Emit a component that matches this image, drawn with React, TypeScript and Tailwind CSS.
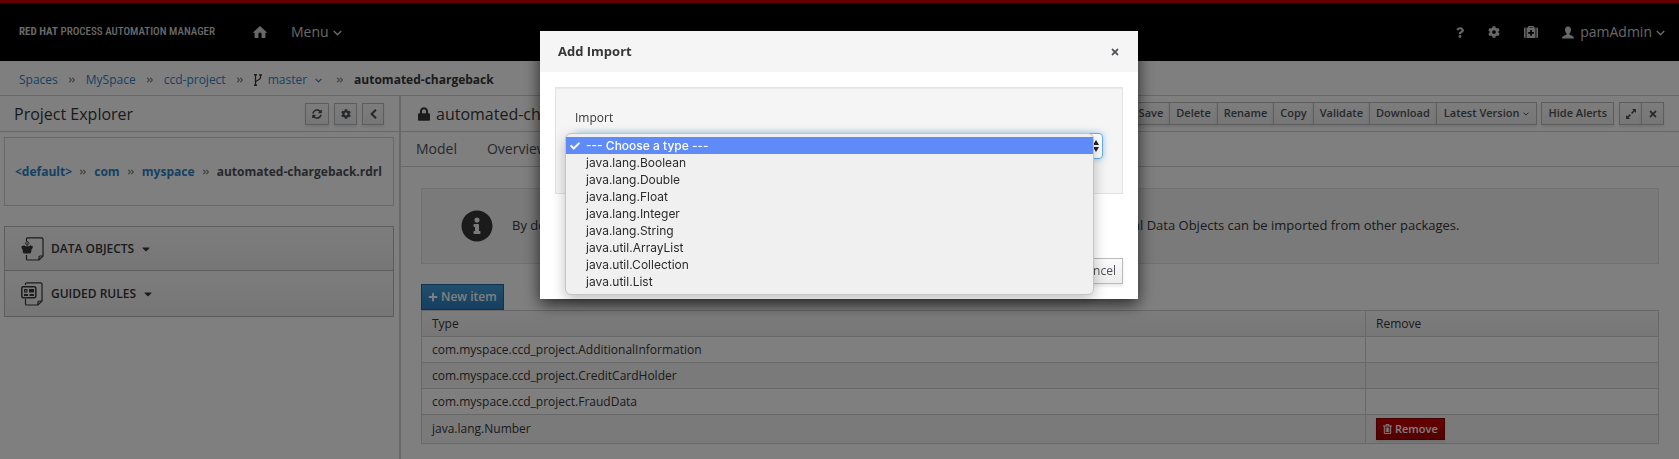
import React from "react";
import {
  FaAngleDoubleRight,
  FaCaretDown,
  FaCheck,
  FaCog,
  FaInfoCircle,
  FaLock,
  FaPlus,
  FaQuestion,
  FaSyncAlt,
  FaTimes,
} from "react-icons/fa";

const TYPES = [
  "java.lang.Boolean",
  "java.lang.Double",
  "java.lang.Float",
  "java.lang.Integer",
  "java.lang.String",
  "java.util.ArrayList",
  "java.util.Collection",
  "java.util.List",
];

const IMPORTS = [
  { type: "com.myspace.ccd_project.AdditionalInformation", removable: false },
  { type: "com.myspace.ccd_project.CreditCardHolder", removable: false },
  { type: "com.myspace.ccd_project.FraudData", removable: false },
  { type: "java.lang.Number", removable: true },
];

const TOOLBAR = ["Save", "Delete", "Rename", "Copy", "Validate", "Download"];

const CHROME_BUTTON =
  "flex items-center justify-center border border-[#bbb] bg-linear-to-b from-[#fafafa] to-[#ededed] text-[#4d5258] shadow-[0_2px_3px_rgba(3,3,3,0.1)]";

function HomeIcon() {
  return (
    <svg viewBox="0 0 14 12" className="h-3 w-3.5" fill="currentColor" aria-hidden="true">
      <path d="M7 0 14 6.4 12.4 6.9V12H8.6V8.2a1.6 1.6 0 0 0-3.2 0V12H1.6V6.9L0 6.4Z" />
    </svg>
  );
}

function MedkitIcon() {
  return (
    <svg viewBox="0 0 14 12" className="h-3 w-3.5" fill="currentColor" aria-hidden="true">
      <path d="M1.6 1.6V12H1a1 1 0 0 1-1-1V2.6a1 1 0 0 1 1-1ZM12.4 1.6V12H13a1 1 0 0 0 1-1V2.6a1 1 0 0 0-1-1Z" />
      <path
        fillRule="evenodd"
        d="M4 1.6V1a1 1 0 0 1 1-1h4a1 1 0 0 1 1 1v.6h1.5V12h-9V1.600ZM5.200 1.600h3.600V1H5.200ZM6.200 3.900v2H4.200v1.800h2v2h1.700v-2h2V5.900h-2v-2Z"
      />
    </svg>
  );
}

function UserIcon() {
  return (
    <svg viewBox="0 0 12 12" className="h-[13px] w-3" fill="currentColor" aria-hidden="true">
      <path d="M6 0c2 0 3 1.300 3 3.200C9 4.800 8.300 6 7.500 6.700v1.200c.5.700 4.500 1.200 4.500 4.100H0c0-2.900 4-3.400 4.500-4.100V6.700C3.700 6 3 4.800 3 3.200 3 1.300 4 0 6 0Z" />
    </svg>
  );
}

function ChevronDownIcon({ className }: { className: string }) {
  return (
    <svg viewBox="0 0 9 6" className={className} fill="none" stroke="currentColor" strokeWidth="1.500" aria-hidden="true">
      <path d="M.8 1 4.500 4.700 8.200 1" />
    </svg>
  );
}

function ChevronLeftIcon() {
  return (
    <svg viewBox="0 0 7 10" className="h-2.5 w-[7px]" fill="none" stroke="currentColor" strokeWidth="2" aria-hidden="true">
      <path d="M6 .8 1.600 5 6 9.200" />
    </svg>
  );
}

function ExpandIcon() {
  return (
    <svg viewBox="0 0 10 10" className="size-2.5" fill="currentColor" aria-hidden="true">
      <path d="M6 0H10v4L8.600 2.600 6.200 5 5 3.800 7.400 1.400ZM4 10H0V6L1.400 7.400 3.800 5 5 6.200 2.600 8.600Z" />
    </svg>
  );
}

function BranchIcon() {
  return (
    <svg viewBox="0 0 8 12" className="h-3 w-2" fill="none" stroke="currentColor" aria-hidden="true">
      <path d="M1.500 1v10M6.500 1.500v2C6.500 6.500 1.500 6 1.500 8.500" strokeWidth="1.300" />
      <path d="M0 .8h3M0 11.200h3M5 1h3" strokeWidth="1.600" />
    </svg>
  );
}

function TrashIcon() {
  return (
    <svg viewBox="0 0 9 10" className="h-2.5 w-[9px]" fill="none" stroke="currentColor" aria-hidden="true">
      <path d="M0 2h9M3 2V.6h3V2M1.300 2v7.400h6.400V2M3.200 3.500v4.500M4.500 3.500v4.500M5.800 3.500v4.500" strokeWidth="1" />
    </svg>
  );
}

function DataObjectIcon() {
  return (
    <svg viewBox="0 0 23 24" className="h-6 w-[23px]" fill="none" stroke="currentColor" aria-hidden="true">
      <path d="M5.500 4V1.800Q5.500.8 6.500.8H20.500Q22 .8 22 2V19L18 23H6.500Q5.500 23 5.500 22V18" strokeWidth="1.200" />
      <path d="M18 23V20Q18 19 19 19H22" strokeWidth="1.200" />
      <path d="M.3 9.500 3 8.300l1.500 1h3.500l1.500-1 2.500 1.200-.8 2.200-.6.600-.6 3.700q-4 1.200-8 0L1.500 12.300.9 11.700Z" fill="currentColor" stroke="none" />
      <path d="M6.200 4 8 6.300 6.200 8.600 4.400 6.300ZM6.200 5.500v2" strokeWidth=".9" />
    </svg>
  );
}

function GuidedRuleIcon() {
  return (
    <svg viewBox="0 0 23 24" className="h-6 w-[23px]" fill="none" stroke="currentColor" aria-hidden="true">
      <path d="M4.500 3V1.800Q4.500.8 5.500.8H19.500Q21 .8 21 2V19L17 23H5.500Q4.500 23 4.500 22V17" strokeWidth="1.200" />
      <path d="M17 23V20Q17 19 18 19H21" strokeWidth="1.200" />
      <rect x=".8" y="4.800" width="14" height="11" rx="1.500" strokeWidth="1.500" />
      <path d="M3 7h3.500v3.500H3ZM8 7h5v3.500H8ZM3 12h4v2H3ZM8.500 12H13v2H8.500Z" fill="currentColor" stroke="none" />
      <path d="m4 8 1.500 1.500M5.500 8 4 9.500" stroke="#eee" strokeWidth=".7" />
    </svg>
  );
}

function Separator() {
  return <FaAngleDoubleRight className="size-2 shrink-0 text-[#8b8d8f]" aria-hidden="true" />;
}

function Header() {
  return (
    <header className="flex h-[61px] items-center border-t-[3px] border-[#c00] bg-black pr-3.5 pl-[19px] text-[#d1d1d1]">
      <a
        href="#"
        className="w-[200px] font-['Roboto_Condensed','Open_Sans_Condensed','Noto_Sans_Condensed','Noto_Sans_CJK_SC',sans-serif] text-[11px] font-medium whitespace-nowrap"
      >
        <b className="font-bold">RED HAT</b> PROCESS AUTOMATION MANAGER
      </a>
      <a href="#" aria-label="Home" className="ml-[34px]">
        <HomeIcon />
      </a>
      <button className="ml-6 flex items-center gap-1 text-sm">
        Menu <ChevronDownIcon className="mt-px h-1.5 w-[9px]" />
      </button>
      <div className="ml-auto flex items-center">
        <button aria-label="Help">
          <FaQuestion className="h-[11px] w-2" />
        </button>
        <button aria-label="Settings" className="ml-6">
          <FaCog className="size-3" />
        </button>
        <button aria-label="Support" className="ml-6">
          <MedkitIcon />
        </button>
        <button className="ml-6 flex items-center text-sm">
          <UserIcon />
          <span className="ml-1.5">pamAdmin</span>
          <ChevronDownIcon className="mt-px ml-1 h-1.5 w-[9px]" />
        </button>
      </div>
    </header>
  );
}

function Breadcrumbs() {
  return (
    <nav aria-label="Breadcrumb" className="flex h-[35px] items-center gap-2.5 border-b border-[#d1d1d1] px-[19px] pt-1 text-xs text-[#2a83c7]">
      <a href="#">Spaces</a>
      <Separator />
      <a href="#">MySpace</a>
      <Separator />
      <a href="#">ccd-project</a>
      <Separator />
      <button className="flex items-center">
        <span className="text-[#363636]">
          <BranchIcon />
        </span>
        <span className="ml-1.5">master</span>
        <ChevronDownIcon className="mt-px mr-1 ml-2 h-[5px] w-[7px]" />
      </button>
      <Separator />
      <b className="font-bold text-[#363636]">automated-chargeback</b>
    </nav>
  );
}

function ProjectExplorer() {
  return (
    <aside className="w-[401px] shrink-0 border-r-2 border-[#d1d1d1]">
      <div className="flex h-9 items-center gap-[5px] border-b border-[#d1d1d1] pr-[15px] pl-3.5">
        <h2 className="mr-auto text-base text-[#363636]">Project Explorer</h2>
        <button aria-label="Refresh" className={`${CHROME_BUTTON} h-[22px] w-6`}>
          <FaSyncAlt className="size-2.5" />
        </button>
        <button aria-label="Customize view" className={`${CHROME_BUTTON} h-[22px] w-[23px]`}>
          <FaCog className="size-2.5" />
        </button>
        <button aria-label="Collapse" className={`${CHROME_BUTTON} h-[22px] w-[22px]`}>
          <ChevronLeftIcon />
        </button>
      </div>
      <div className="mt-[5px] mr-[5px] ml-1 flex h-[69px] items-center justify-between border border-[#d1d1d1] pr-[11px] pl-2.5 text-xs font-bold text-[#2a83c7]">
        <a href="#">&lt;default&gt;</a>
        <Separator />
        <a href="#">com</a>
        <Separator />
        <a href="#">myspace</a>
        <Separator />
        <span className="text-[#4d5258]">automated-chargeback.rdrl</span>
      </div>
      <div className="mt-5 mr-[5px] ml-1 divide-y divide-[#bbb] border border-[#bbb] text-xs font-semibold text-[#363636]">
        <button className="flex h-11 w-full items-center bg-linear-to-b from-[#fafafa] to-[#ededed] pl-4">
          <DataObjectIcon />
          <span className="ml-[7px]">DATA OBJECTS</span>
          <FaCaretDown className="ml-1.5 size-3" />
        </button>
        <button className="flex h-[45px] w-full items-center bg-linear-to-b from-[#fafafa] to-[#ededed] pl-4">
          <GuidedRuleIcon />
          <span className="ml-[7px]">GUIDED RULES</span>
          <FaCaretDown className="ml-1.5 size-3" />
        </button>
      </div>
    </aside>
  );
}

function Toolbar() {
  return (
    <div className="ml-auto flex items-center text-[11px] font-semibold whitespace-nowrap">
      {TOOLBAR.map((name) => (
        <button key={name} className={`${CHROME_BUTTON} -mr-px h-[23px] px-1.5`}>
          {name}
        </button>
      ))}
      <button className={`${CHROME_BUTTON} h-[23px] gap-1 px-[7px]`}>
        Latest Version <ChevronDownIcon className="h-1 w-1.5" />
      </button>
      <button className={`${CHROME_BUTTON} ml-1 h-[23px] px-1.5`}>Hide Alerts</button>
      <button aria-label="Expand" className={`${CHROME_BUTTON} -mr-px ml-[5px] h-[23px] w-[23px]`}>
        <ExpandIcon />
      </button>
      <button aria-label="Close editor" className={`${CHROME_BUTTON} h-[23px] w-[23px]`}>
        <FaTimes className="size-2.5" />
      </button>
    </div>
  );
}

function Editor() {
  return (
    <main className="min-w-0 flex-1">
      <div className="flex h-9 items-center border-b border-[#d1d1d1] pr-[15px] pl-[17px]">
        <FaLock className="h-4 w-3 shrink-0 text-[#363636]" />
        <h1 className="ml-1.5 truncate text-base text-[#363636]">automated-chargeback.rdrl - Guided Rules</h1>
        <Toolbar />
      </div>
      <div role="tablist" className="flex h-[35px] items-center gap-[30px] border-b border-[#d1d1d1] px-[15px] text-sm text-[#4d5258]">
        <button role="tab">Model</button>
        <button role="tab">Overview</button>
        <button role="tab">Source</button>
        <button role="tab">Data Objects</button>
      </div>
      <div className="pt-[21px] pr-5 pl-5">
        <div className="flex h-[76px] items-center border border-[#e2e2e2] bg-[#f5f5f5] pl-[39px] text-[13px] text-[#363636]">
          <FaInfoCircle className="size-8 shrink-0 text-[#363636]" />
          <p className="ml-[19px] whitespace-nowrap">
            By default, all Data Objects in the same package are automatically available for use with rules. Additional Data Objects can be imported from other packages.
          </p>
        </div>
        <button className="mt-5 flex h-[26px] items-center gap-[3px] border border-[#1c64a0] bg-linear-to-b from-[#429fd8] to-[#2a7fc0] px-1.5 text-xs font-semibold text-white">
          <FaPlus className="size-2.5" />
          New item
        </button>
        <table className="w-full border-collapse border border-[#d1d1d1] text-xs text-[#363636]">
          <thead>
            <tr className="h-[26px] bg-linear-to-b from-[#fafafa] to-[#ededed] text-left">
              <th className="border border-[#d1d1d1] px-2.5 font-medium">Type</th>
              <th className="w-[293px] border border-[#d1d1d1] px-2.5 font-medium">Remove</th>
            </tr>
          </thead>
          <tbody>
            {IMPORTS.map((row) => (
              <tr key={row.type} className="h-[26px] even:bg-[#f5f5f5]">
                <td className="border border-[#d1d1d1] px-2.5">{row.type}</td>
                <td className="border border-[#d1d1d1] px-2.5">
                  {row.removable && (
                    <button className="my-[3px] flex h-[22px] items-center gap-[3px] border border-[#8b0000] bg-linear-to-b from-[#c00] to-[#a30000] px-1.5 text-[11px] font-semibold text-white shadow-[0_2px_3px_rgba(3,3,3,0.1)]">
                      <TrashIcon />
                      Remove
                    </button>
                  )}
                </td>
              </tr>
            ))}
          </tbody>
        </table>
      </div>
    </main>
  );
}

function AddImportDialog() {
  return (
    <div className="fixed inset-0 flex items-start justify-center bg-black/50 pt-[31px] pr-px">
      <div
        role="dialog"
        aria-modal="true"
        aria-labelledby="dialog-title"
        className="w-[598px] max-w-full bg-white text-xs text-[#363636] shadow-[0_5px_15px_rgba(0,0,0,0.7)]"
      >
        <div className="flex h-[41px] items-center justify-between bg-[#f5f5f5] px-[18px]">
          <h2 id="dialog-title" className="text-[13px] font-bold">
            Add Import
          </h2>
          <button aria-label="Close" className="text-[#4d5258]">
            <FaTimes className="size-2.5" />
          </button>
        </div>
        <div className="px-[15px] py-[15px]">
          <div className="h-[107px] border border-[#e3e3e3] bg-[#f5f5f5] px-[19px] pt-5 shadow-[inset_0_1px_1px_rgba(0,0,0,0.05)]">
            <label htmlFor="import-type" className="block leading-5 font-medium">
              Import
            </label>
            <div className="relative mt-[5px]">
              <select
                id="import-type"
                className="h-[26px] w-full appearance-none rounded-sm border border-[#66afe9] bg-white px-1.5 shadow-[0_0_6px_rgba(102,175,233,0.6)]"
              >
                <option>--- Choose a type ---</option>
                {TYPES.map((type) => (
                  <option key={type}>{type}</option>
                ))}
              </select>
              <svg viewBox="0 0 6 12" className="pointer-events-none absolute top-[7px] right-1 h-3 w-1.5" aria-hidden="true">
                <path d="M3 0 6 5H0ZM3 12 0 7H6Z" fill="#222" />
              </svg>
              <ul
                role="listbox"
                aria-label="Import"
                className="absolute top-0 right-[9px] -left-[10px] z-10 rounded-md border border-[#c4c4c4] bg-[#f0f0f0] pt-[3px] pb-1 font-['Inter',sans-serif] text-xs leading-[17px] text-[#2b2b2b] shadow-[0_5px_14px_rgba(0,0,0,0.25)]"
              >
                <li role="option" aria-selected="true" className="flex items-center bg-[#5f8bf8] pl-1 font-medium text-white">
                  <FaCheck className="mr-1.5 size-2.5" />
                  --- Choose a type ---
                </li>
                {TYPES.map((type) => (
                  <li key={type} role="option" aria-selected="false" className="pl-5">
                    {type}
                  </li>
                ))}
              </ul>
            </div>
          </div>
          <div className="mt-16 flex justify-end">
            <button className={`${CHROME_BUTTON} h-[26px] px-1.5 font-medium`}>Cancel</button>
          </div>
        </div>
      </div>
    </div>
  );
}

export default function App() {
  return (
    <div className="flex min-h-screen flex-col bg-white font-['Open_Sans',sans-serif]">
      <Header />
      <Breadcrumbs />
      <div className="flex flex-1">
        <ProjectExplorer />
        <Editor />
      </div>
      <AddImportDialog />
    </div>
  );
}
